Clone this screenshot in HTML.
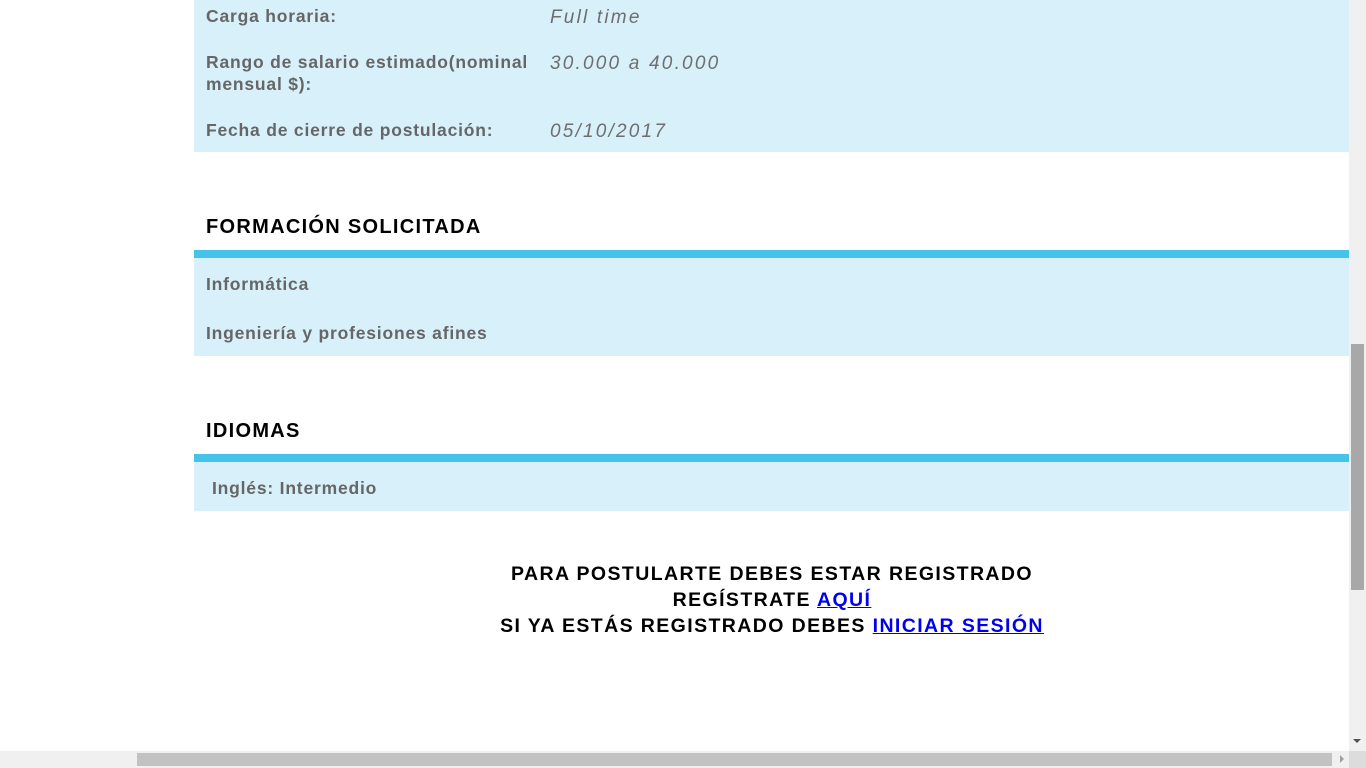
<!DOCTYPE html>
<html><head><meta charset="utf-8"><style>
body{margin:0;width:1366px;height:768px;overflow:hidden;background:#fff;font-family:"Liberation Sans",sans-serif;position:relative}
.a{position:absolute}
.bg{background:#d7f0fa}
.bar{background:#47c2ea}
.l{color:#666;font-weight:bold;font-size:17.5px;line-height:22px;letter-spacing:.8px}
.v{color:#6e6e6e;font-style:italic;font-size:19px;line-height:22px;letter-spacing:2.2px}
.h{color:#000;font-weight:bold;font-size:20px;letter-spacing:1.3px}
.c{color:#000;font-weight:bold;font-size:19.5px;letter-spacing:1.4px;text-align:center;width:1156px;left:194px;line-height:26px}
.c a{color:#00e;text-decoration:underline}
</style></head><body>
<div class="a bg" style="left:194px;top:0;width:1155px;height:152px"></div>
<div class="a l" style="left:206px;top:5px">Carga horaria:</div>
<div class="a v" style="left:550px;top:7px">Full time</div>
<div class="a l" style="left:206px;top:51px;width:340px">Rango de salario estimado(nominal mensual $):</div>
<div class="a v" style="left:550px;top:53px">30.000 a 40.000</div>
<div class="a l" style="left:206px;top:119px">Fecha de cierre de postulación:</div>
<div class="a v" style="left:550px;top:121px">05/10/2017</div>

<div class="a h" style="left:206px;top:216px">FORMACIÓN SOLICITADA</div>
<div class="a bar" style="left:194px;top:250px;width:1155px;height:8px"></div>
<div class="a bg" style="left:194px;top:258px;width:1155px;height:98px"></div>
<div class="a l" style="left:206px;top:273px">Informática</div>
<div class="a l" style="left:206px;top:322px">Ingeniería y profesiones afines</div>

<div class="a h" style="left:206px;top:420px">IDIOMAS</div>
<div class="a bar" style="left:194px;top:454px;width:1155px;height:8px"></div>
<div class="a bg" style="left:194px;top:462px;width:1155px;height:49px"></div>
<div class="a l" style="left:212px;top:477px">Inglés: Intermedio</div>

<div class="a c" style="top:561px">PARA POSTULARTE DEBES ESTAR REGISTRADO<br>REGÍSTRATE <a>AQUÍ</a><br>SI YA ESTÁS REGISTRADO DEBES <a>INICIAR SESIÓN</a></div>

<div class="a" style="left:1349px;top:0;width:17px;height:751px;background:#f0f0f0"></div>
<div class="a" style="left:1351px;top:344px;width:13px;height:246px;background:#a8a8a8"></div>
<div class="a" style="left:1353px;top:739px;width:0;height:0;border-left:4px solid transparent;border-right:4px solid transparent;border-top:4px solid #505050"></div>
<div class="a" style="left:0;top:751px;width:1349px;height:17px;background:#f0f0f0"></div>
<div class="a" style="left:137px;top:753px;width:1195px;height:13px;background:#c2c2c2"></div>
<div class="a" style="left:1340px;top:755px;width:0;height:0;border-top:4px solid transparent;border-bottom:4px solid transparent;border-left:4px solid #a0a0a0"></div>
<div class="a" style="left:1349px;top:751px;width:17px;height:17px;background:#dcdcdc"></div>
</body></html>
